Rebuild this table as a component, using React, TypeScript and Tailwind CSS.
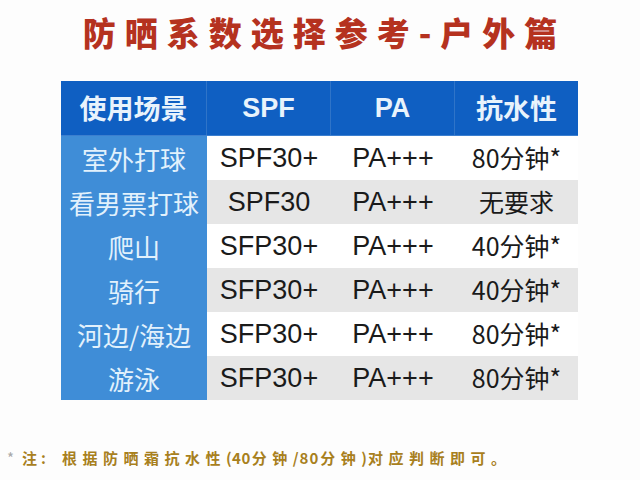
import React from "react";

const rows = [
  { scene: "室外打球", spf: "SPF30+", pa: "PA+++", water: "80分钟*" },
  { scene: "看男票打球", spf: "SPF30", pa: "PA+++", water: "无要求" },
  { scene: "爬山", spf: "SFP30+", pa: "PA+++", water: "40分钟*" },
  { scene: "骑行", spf: "SFP30+", pa: "PA+++", water: "40分钟*" },
  { scene: "河边/海边", spf: "SFP30+", pa: "PA+++", water: "80分钟*" },
  { scene: "游泳", spf: "SFP30+", pa: "PA+++", water: "80分钟*" },
];

const cjk = { fontFamily: '"Noto Sans CJK SC", "Liberation Sans", sans-serif' };
const latin = { fontFamily: '"Liberation Sans", "Noto Sans CJK SC", sans-serif' };

export default function App() {
  return (
    <div className="w-[640px] h-[480px] bg-[#fdfdfd] flex flex-col overflow-hidden">
      <div
        className="mt-[13px] h-[38px] flex items-center justify-center text-[33px] leading-none font-black tracking-[9px] text-[#b5321f] pl-[9px]"
        style={cjk}
      >
        防晒系数选择参考-户外篇
      </div>

      <div className="mt-[30px] ml-[61px] w-[517px] flex flex-col">
        <div className="grid grid-cols-[146px_124px_124px_123px] h-[55px] bg-[#0f5fc2] border-b border-[#3c7fcf]">
          <div className="flex items-center justify-center text-[27px] font-bold text-[#e8f3fc] border-r border-[#2f74c8]" style={cjk}>
            使用场景
          </div>
          <div className="flex items-center justify-center text-[27px] font-bold text-[#e8f3fc] border-r border-[#2f74c8]" style={latin}>
            SPF
          </div>
          <div className="flex items-center justify-center text-[27px] font-bold text-[#e8f3fc] border-r border-[#2f74c8]" style={latin}>
            PA
          </div>
          <div className="flex items-center justify-center text-[27px] font-bold text-[#e8f3fc]" style={cjk}>
            抗水性
          </div>
        </div>
        {rows.map((r, i) => (
          <div
            key={i}
            className={
              "grid grid-cols-[146px_124px_124px_123px] h-[44px] " +
              (i % 2 === 1 ? "bg-[#e6e6e6]" : "bg-white")
            }
          >
            <div className="flex items-center justify-center bg-[#3f8dd7] text-[26px] text-[#e2f1fc]" style={cjk}>
              {r.scene}
            </div>
            <div className="flex items-center justify-center text-[27px] text-[#1a1a1a]" style={latin}>
              {r.spf}
            </div>
            <div className="flex items-center justify-center text-[27px] text-[#1a1a1a]" style={latin}>
              {r.pa}
            </div>
            <div className="flex items-center justify-center text-[25px] text-[#1a1a1a]" style={cjk}>
              {r.water}
            </div>
          </div>
        ))}
      </div>

      <div className="mt-[48px] ml-[7px] flex items-center h-[18px] text-[15px] leading-none font-bold text-[#a8801d]" style={cjk}>
        <span className="text-[#a8a8a8] font-normal mr-[8px]">*</span>
        <span className="tracking-[4px]">注:</span>
        <span className="ml-[12px] tracking-[5.5px]">根据防晒霜抗水性</span>
        <span className="tracking-[0.5px]">(40</span>
        <span className="tracking-[5.5px] ml-[1px]">分钟</span>
        <span className="tracking-[1px]">/80</span>
        <span className="tracking-[5.5px] ml-[1px]">分钟</span>
        <span className="tracking-[1px]">)</span>
        <span className="tracking-[5.5px]">对应判断即可。</span>
      </div>
    </div>
  );
}
